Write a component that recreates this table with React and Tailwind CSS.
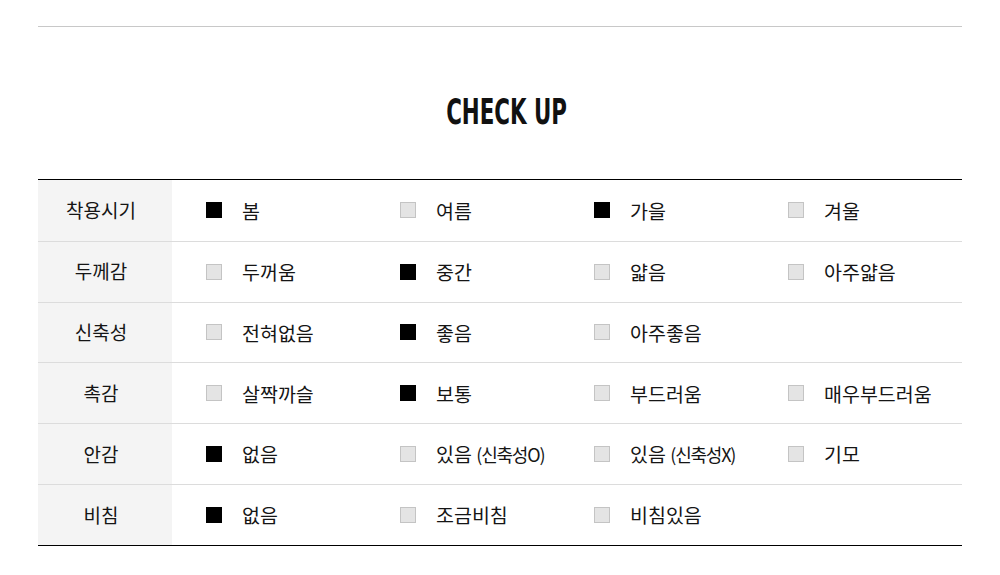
import React from "react";

const rows = [
  { label: "착용시기", opts: [["봄", 1], ["여름", 0], ["가을", 1], ["겨울", 0]] },
  { label: "두께감", opts: [["두꺼움", 0], ["중간", 1], ["얇음", 0], ["아주얇음", 0]] },
  { label: "신축성", opts: [["전혀없음", 0], ["좋음", 1], ["아주좋음", 0]] },
  { label: "촉감", opts: [["살짝까슬", 0], ["보통", 1], ["부드러움", 0], ["매우부드러움", 0]] },
  { label: "안감", opts: [["없음", 1], ["있음 (신축성O)", 0], ["있음 (신축성X)", 0], ["기모", 0]] },
  { label: "비침", opts: [["없음", 1], ["조금비침", 0], ["비침있음", 0]] },
];

function Box({ on }) {
  return on ? (
    <span className="block w-4 h-4 bg-black shrink-0" />
  ) : (
    <span className="block w-4 h-4 bg-[#e4e4e4] border border-[#c4c4c4] shrink-0" />
  );
}

export default function App() {
  return (
    <div className="w-[1000px] h-[575px] bg-white overflow-hidden" style={{ fontFamily: '"Noto Sans CJK KR", "Noto Sans", sans-serif' }}>
      <div className="mx-[38px] pt-[26px]">
        <div className="border-t border-[#c8c8c8]" />
        <div className="h-[152px] flex items-center justify-center pt-[18px] pl-[14px]">
          <h2
            className="text-[36px] font-bold text-[#111] leading-none scale-x-[0.66]"
            style={{ fontFamily: '"DejaVu Sans Condensed", "DejaVu Sans", sans-serif', fontStretch: "condensed" }}
          >
            CHECK UP
          </h2>
        </div>
        <div className="border-t border-black border-b">
          {rows.map((r, i) => (
            <div key={i} className={`flex h-[60.8px] ${i > 0 ? "border-t border-[#dcdcdc]" : ""}`}>
              <div className="w-[134px] shrink-0 bg-[#f4f4f4] flex items-center justify-center pr-[8px] text-[19px] text-[#151515]">
                {r.label}
              </div>
              <div className="flex pl-[34px] items-center">
                {r.opts.map(([t, on], j) => (
                  <div key={j} className="w-[194px] flex items-center gap-5">
                    <Box on={on} />
                    <span className="text-[19.5px] text-[#151515] leading-none">
                      {t.includes("(") ? (
                        <>
                          {t.split(" ")[0]}{" "}
                          <span className="text-[18px] tracking-[-1.2px]">{t.split(" ")[1]}</span>
                        </>
                      ) : (
                        t
                      )}
                    </span>
                  </div>
                ))}
              </div>
            </div>
          ))}
        </div>
      </div>
    </div>
  );
}
